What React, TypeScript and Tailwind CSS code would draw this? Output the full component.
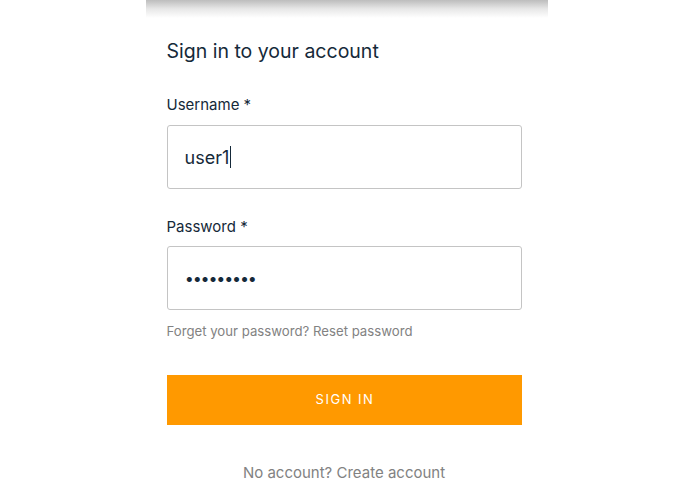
export default function App() {
  return (
    <div className="min-h-screen bg-white flex justify-center" style={{ fontFamily: "Inter, 'Liberation Sans', sans-serif" }}>
      <div className="w-[402px] mr-[2px]">
        {/* shadow cast by the card above */}
        <div className="h-[18px] bg-gradient-to-b from-[#bdbdbd] via-[#e8e8e8] to-white" />
        <div className="pl-[21px] pr-[26px] pt-[21px]">
          <h1 className="text-[19.5px] leading-[24px] text-[#152939]">Sign in to your account</h1>

          <label className="block mt-[32px] text-[15px] leading-[20px] text-[#152939]">Username *</label>
          <div className="mt-[10px] h-[64px] border border-[#c4c4c4] rounded-[3px] flex items-center pl-[17px]">
            <span className="text-[18px] text-[#152939]">user1</span>
            <span className="w-[1px] h-[22px] bg-[#152939] ml-[1px]" />
          </div>

          <label className="block mt-[28px] text-[15px] leading-[20px] text-[#152939]">Password *</label>
          <div className="mt-[9px] h-[64px] border border-[#c4c4c4] rounded-[3px] flex items-center pl-[18px]">
            <span className="text-[16px] text-[#152939] font-bold tracking-[0.3px]">•••••••••</span>
          </div>

          <p className="mt-[12px] text-[13.2px] leading-[18px] text-[#828282]">Forget your password? Reset password</p>

          <button className="mt-[35px] w-full h-[50px] bg-[#ff9900] text-white text-[13px] tracking-[1.5px] pl-[2px]">SIGN IN</button>

          <p className="mt-[38px] text-center text-[15px] leading-[20px] text-[#828282]">No account? Create account</p>
        </div>
      </div>
    </div>
  );
}
